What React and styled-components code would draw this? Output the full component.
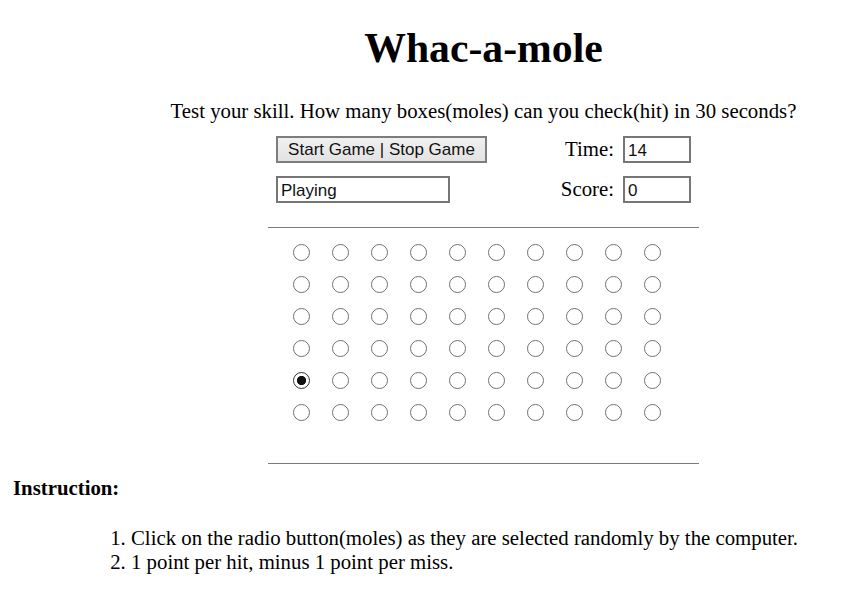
import React from "react";
import styled, { createGlobalStyle } from "styled-components";

const GlobalStyle = createGlobalStyle`
  html, body { background: #fff; }
  body {
    margin: 10px;
    font-family: "Liberation Serif", "Times New Roman", serif;
    font-size: 20.8px;
    color: #000;
  }
`;

const Main = styled.div`
  margin-left: 100px;
  text-align: center;
`;

const Title = styled.h1`
  font-size: 41.7px;
  font-weight: bold;
  margin: 15px 0 0;
  line-height: 47px;
`;

const Lead = styled.p`
  margin: 27px 0 0;
  line-height: 23px;
`;

const Controls = styled.div`
  width: 415px;
  margin: 14px auto 0;
  display: grid;
  grid-template-columns: 211px 1fr 68px;
  grid-auto-rows: 27px;
  row-gap: 13px;
  column-gap: 9px;
  align-items: center;
`;

const controlFont = `
  font-family: "Liberation Sans", Arial, sans-serif;
  font-size: 17px;
  color: #111;
  box-sizing: border-box;
  height: 27px;
  margin: 0;
`;

const Button = styled.button`
  ${controlFont}
  width: 211px;
  padding: 0 6px;
  background: linear-gradient(#f0f0f0, #e3e3e3);
  border: 2px solid #7d7d7d;
  border-radius: 0;
  text-align: center;
`;

const Field = styled.input`
  ${controlFont}
  width: ${(p) => p.$w}px;
  padding: 2px 3px 0;
  background: #fff;
  border: 2px solid #767676;
  border-radius: 0;
  outline: none;
`;

const Label = styled.span`
  text-align: right;
  line-height: 23px;
  margin-top: -2px;
`;

const Rule = styled.hr`
  width: 431px;
  margin: ${(p) => p.$m};
  border: 0;
  border-top: 1px solid #7a7a7a;
  height: 0;
`;

const Board = styled.div`
  width: 431px;
  box-sizing: border-box;
  margin: 16px auto 0;
  padding-left: 25px;
  display: grid;
  grid-template-columns: repeat(10, 17px);
  column-gap: 22px;
  row-gap: 15px;
`;

const Mole = styled.input`
  appearance: none;
  -webkit-appearance: none;
  margin: 0;
  width: 17px;
  height: 17px;
  box-sizing: border-box;
  border-radius: 50%;
  border: 1.5px solid ${(p) => (p.defaultChecked ? "#333" : "#727272")};
  background: ${(p) =>
    p.defaultChecked
      ? "radial-gradient(circle, #111 0 4.3px, #fff 4.9px)"
      : "#fff"};
  cursor: pointer;
`;

const Heading = styled.div`
  font-weight: bold;
  margin: 12px 0 0 3px;
  line-height: 23px;
`;

const Steps = styled.ol`
  margin: 27px 0 0;
  padding-left: 121px;
  line-height: 24px;
`;

const ROWS = 6;
const COLS = 10;

export default function App() {
  const cells = [];
  for (let r = 0; r < ROWS; r++) {
    for (let c = 0; c < COLS; c++) {
      cells.push(
        <Mole
          key={`${r}-${c}`}
          type="radio"
          name={`mole-${r}-${c}`}
          defaultChecked={r === 4 && c === 0}
        />
      );
    }
  }
  return (
    <>
      <GlobalStyle />
      <Main>
        <Title>Whac-a-mole</Title>
        <Lead>
          Test your skill. How many boxes(moles) can you check(hit) in 30
          seconds?
        </Lead>
        <Controls>
          <Button>Start Game | Stop Game</Button>
          <Label>Time:</Label>
          <Field $w={68} defaultValue="14" />
          <Field $w={174} defaultValue="Playing" />
          <Label>Score:</Label>
          <Field $w={68} defaultValue="0" />
        </Controls>
        <Rule $m="24px auto 0" />
        <Board>{cells}</Board>
        <Rule $m="42px auto 0" />
      </Main>
      <Heading>Instruction:</Heading>
      <Steps>
        <li>
          Click on the radio button(moles) as they are selected randomly by the
          computer.
        </li>
        <li>1 point per hit, minus 1 point per miss.</li>
      </Steps>
    </>
  );
}
